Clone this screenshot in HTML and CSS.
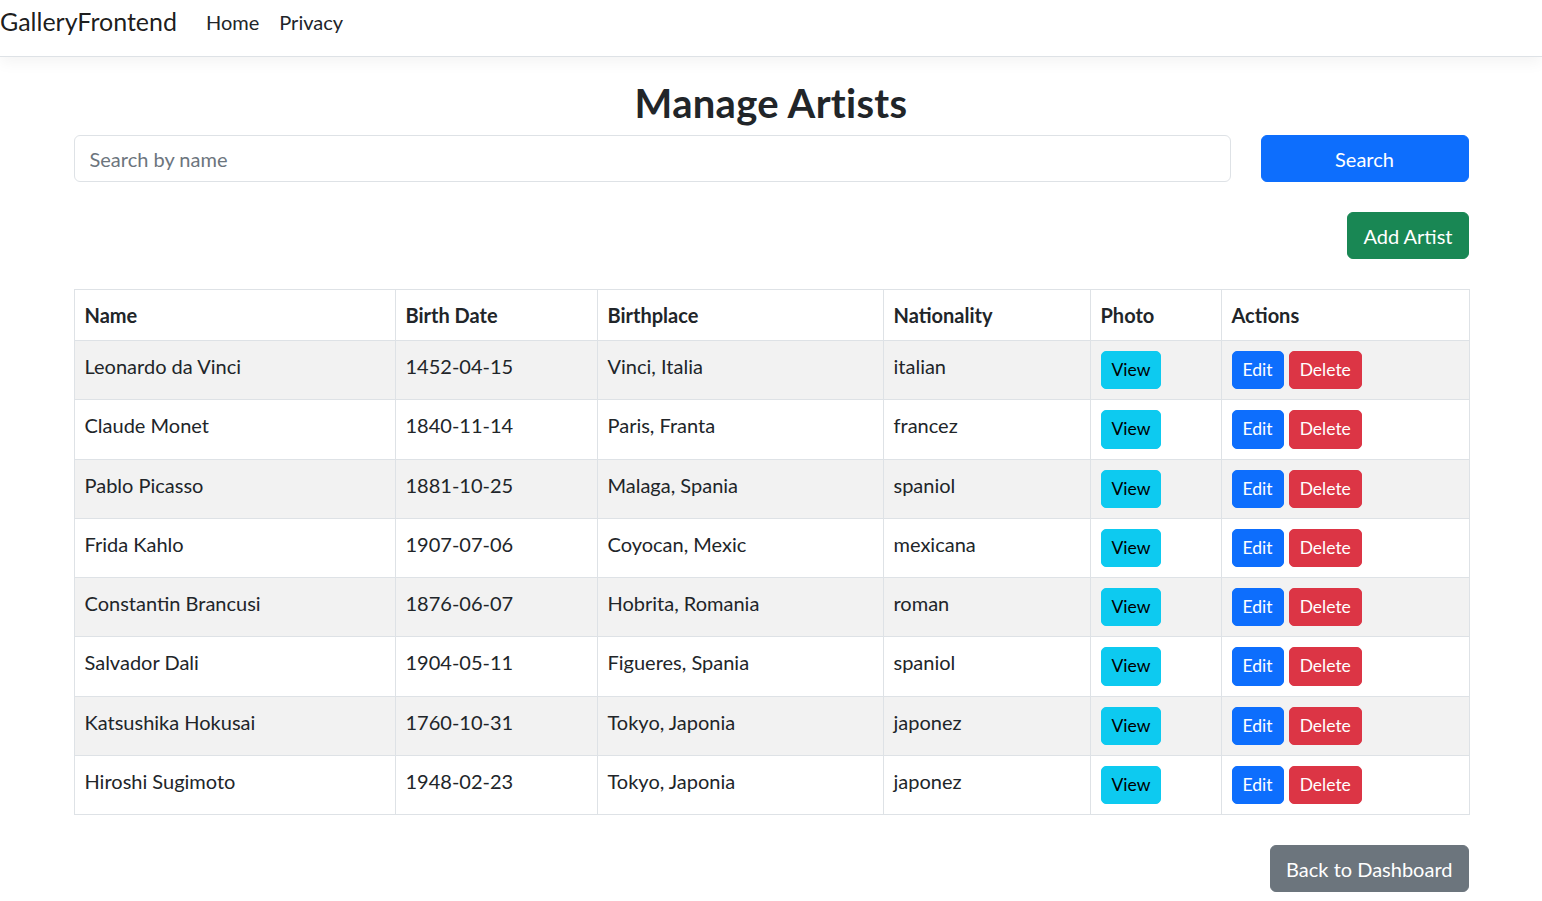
FILE: index.html
```html
<!DOCTYPE html>
<html lang="en">
<head>
<meta charset="utf-8">
<title>Manage Artists - GalleryFrontend</title>
<link rel="stylesheet" href="styles.css">
</head>
<body>
<header class="navbar">
  <a class="brand" href="#">GalleryFrontend</a>
  <nav class="nav">
    <a class="nav-link" href="#">Home</a>
    <a class="nav-link" href="#">Privacy</a>
  </nav>
</header>
<main class="container">
  <h2 class="title">Manage Artists</h2>
  <div class="search-row">
    <input class="form-control" type="text" placeholder="Search by name">
    <button class="btn btn-primary btn-block">Search</button>
  </div>
  <div class="add-row">
    <button class="btn btn-success">Add Artist</button>
  </div>
  <table class="table">
    <colgroup>
      <col class="c-name"><col class="c-date"><col class="c-place"><col class="c-nat"><col class="c-photo"><col class="c-act">
    </colgroup>
    <thead>
      <tr><th>Name</th><th>Birth Date</th><th>Birthplace</th><th>Nationality</th><th>Photo</th><th>Actions</th></tr>
    </thead>
    <tbody>
      <tr><td>Leonardo da Vinci</td><td>1452-04-15</td><td>Vinci, Italia</td><td>italian</td><td><button class="btn-sm btn-info">View</button></td><td><button class="btn-sm btn-primary">Edit</button> <button class="btn-sm btn-danger">Delete</button></td></tr>
      <tr><td>Claude Monet</td><td>1840-11-14</td><td>Paris, Franta</td><td>francez</td><td><button class="btn-sm btn-info">View</button></td><td><button class="btn-sm btn-primary">Edit</button> <button class="btn-sm btn-danger">Delete</button></td></tr>
      <tr><td>Pablo Picasso</td><td>1881-10-25</td><td>Malaga, Spania</td><td>spaniol</td><td><button class="btn-sm btn-info">View</button></td><td><button class="btn-sm btn-primary">Edit</button> <button class="btn-sm btn-danger">Delete</button></td></tr>
      <tr><td>Frida Kahlo</td><td>1907-07-06</td><td>Coyocan, Mexic</td><td>mexicana</td><td><button class="btn-sm btn-info">View</button></td><td><button class="btn-sm btn-primary">Edit</button> <button class="btn-sm btn-danger">Delete</button></td></tr>
      <tr><td>Constantin Brancusi</td><td>1876-06-07</td><td>Hobrita, Romania</td><td>roman</td><td><button class="btn-sm btn-info">View</button></td><td><button class="btn-sm btn-primary">Edit</button> <button class="btn-sm btn-danger">Delete</button></td></tr>
      <tr><td>Salvador Dali</td><td>1904-05-11</td><td>Figueres, Spania</td><td>spaniol</td><td><button class="btn-sm btn-info">View</button></td><td><button class="btn-sm btn-primary">Edit</button> <button class="btn-sm btn-danger">Delete</button></td></tr>
      <tr><td>Katsushika Hokusai</td><td>1760-10-31</td><td>Tokyo, Japonia</td><td>japonez</td><td><button class="btn-sm btn-info">View</button></td><td><button class="btn-sm btn-primary">Edit</button> <button class="btn-sm btn-danger">Delete</button></td></tr>
      <tr><td>Hiroshi Sugimoto</td><td>1948-02-23</td><td>Tokyo, Japonia</td><td>japonez</td><td><button class="btn-sm btn-info">View</button></td><td><button class="btn-sm btn-primary">Edit</button> <button class="btn-sm btn-danger">Delete</button></td></tr>
    </tbody>
  </table>
  <div class="back-row">
    <button class="btn btn-secondary">Back to Dashboard</button>
  </div>
</main>
</body>
</html>
```
FILE: styles.css
```css
* { box-sizing: border-box; }
html, body { margin: 0; padding: 0; }
body {
  font-family: Lato, "Liberation Sans", sans-serif;
  font-size: 20px;
  line-height: 1.5;
  color: #212529;
  background: #fff;
}
.navbar {
  display: flex;
  align-items: center;
  height: 57px;
  padding-bottom: 13px;
  border-bottom: 1px solid #dee2e6;
  box-shadow: 0 5px 15px rgba(0,0,0,.05);
  background: #fff;
}
.brand {
  font-size: 25px;
  color: rgba(0,0,0,.9);
  text-decoration: none;
  margin-right: 19px;
}
.nav { display: flex; }
.nav-link {
  color: #212529;
  text-decoration: none;
  padding: 0 10px;
}
.container {
  width: 1425px;
  margin: 0 auto;
  padding: 22px 15px 0;
}
.title {
  margin: 0 0 8px;
  text-align: center;
  font-size: 40px;
  line-height: 1.2;
  font-weight: 700;
  letter-spacing: 0.3px;
}
.search-row {
  display: flex;
  gap: 30px;
}
.form-control {
  flex: 1;
  height: 47px;
  font: inherit;
  color: #212529;
  padding: 7px 15px;
  border: 1px solid #dee2e6;
  border-radius: 6px;
  outline: none;
}
.form-control::placeholder { color: #6c757d; }
.btn {
  font: inherit;
  height: 47px;
  padding: 7px 15px;
  border: 1px solid transparent;
  border-radius: 6px;
  color: #fff;
  cursor: pointer;
}
.btn-block { width: 208px; }
.add-row, .back-row {
  display: flex;
  justify-content: flex-end;
}
.add-row { margin: 30px 0 30px; }
.back-row { margin-top: 30px; }
.btn-primary { background: #0d6efd; border-color: #0d6efd; color: #fff; }
.btn-success { background: #198754; border-color: #198754; color: #fff; }
.btn-secondary { background: #6c757d; border-color: #6c757d; color: #fff; }
.btn-info { background: #0dcaf0; border-color: #0dcaf0; color: #000; }
.btn-danger { background: #dc3545; border-color: #dc3545; color: #fff; }
.btn-sm {
  font-family: inherit;
  font-size: 17.5px;
  line-height: 26.25px;
  padding: 5px 10px;
  border-width: 1px;
  border-style: solid;
  border-radius: 5px;
  cursor: pointer;
  vertical-align: top;
}
.table {
  width: 100%;
  border-collapse: collapse;
  table-layout: fixed;
  border: 1px solid #dee2e6;
}
.c-name { width: 321px; }
.c-date { width: 202px; }
.c-place { width: 286px; }
.c-nat { width: 207px; }
.c-photo { width: 131px; }
.c-act { width: 248px; }
.table th, .table td {
  border: 1px solid #dee2e6;
  padding: 10px;
  text-align: left;
  vertical-align: top;
}
.table th { font-weight: 700; }
.table tbody tr:nth-child(odd) td { background: #f2f2f2; }
```
